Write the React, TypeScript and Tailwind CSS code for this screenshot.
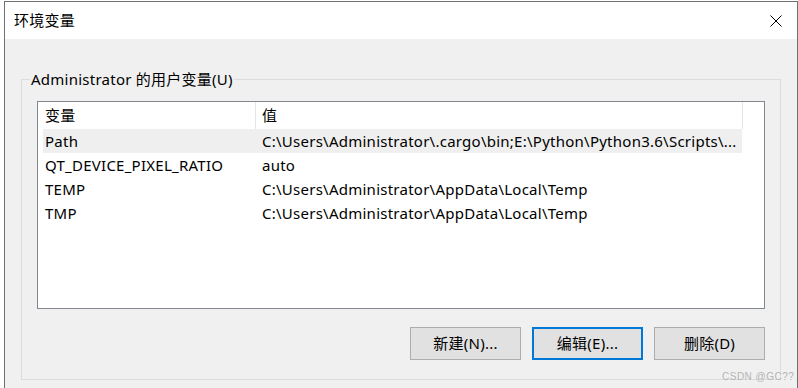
const rows = [
  { name: "Path", value: "C:\\Users\\Administrator\\.cargo\\bin;E:\\Python\\Python3.6\\Scripts\\...", selected: true },
  { name: "QT_DEVICE_PIXEL_RATIO", value: "auto" },
  { name: "TEMP", value: "C:\\Users\\Administrator\\AppData\\Local\\Temp" },
  { name: "TMP", value: "C:\\Users\\Administrator\\AppData\\Local\\Temp" },
]

function CloseIcon() {
  return (
    <svg width="12" height="12" viewBox="0 0 12 12" className="block">
      <path d="M0.5 0.5 L11.5 11.5 M11.5 0.5 L0.5 11.5" stroke="#000" strokeWidth="1" fill="none" />
    </svg>
  )
}

export default function App() {
  return (
    <div className="relative w-[798px] h-[388px] overflow-hidden bg-white pt-[1px] pl-[4px] font-['Noto_Sans','Noto_Sans_CJK_SC',sans-serif] text-[15px] tracking-[0.25px] text-black">
      {/* Dialog */}
      <div className="h-[400px] w-[794px] border-l border-t border-r border-[#707070] flex flex-col bg-[#f0f0f0]">
        {/* Title bar */}
        <div className="h-[37px] bg-white flex items-center justify-between pl-[9px] pr-[15px] shrink-0">
          <span className="leading-none">环境变量</span>
          <CloseIcon />
        </div>

        {/* Content */}
        <div className="px-[16px] pt-[30px]">
          <fieldset className="border border-[#dcdcdc] h-[311px]">
            <legend className="ml-[8px] px-[1px] leading-[20px]">Administrator 的用户变量(U)</legend>

            <div className="px-[15px] pb-[19px]">
              {/* List view */}
              <div className="mt-[12px] h-[208px] border border-[#828790] bg-white">
                {/* Header */}
                <div className="flex h-[27px] items-center">
                  <div className="w-[217px] h-full pl-[7px] flex items-center">变量</div>
                  <div className="w-px h-full bg-[#e5e5e5]" />
                  <div className="w-[486px] h-full pl-[6px] flex items-center">值</div>
                  <div className="w-px h-full bg-[#e5e5e5]" />
                </div>
                {/* Rows */}
                <div className="pl-[5px]">
                  {rows.map((r) => (
                    <div
                      key={r.name}
                      className={`flex h-[24px] w-[699px] items-center whitespace-nowrap ${r.selected ? "bg-[#efefef]" : ""}`}
                    >
                      <div className="w-[217px] pl-[2px]">{r.name}</div>
                      <div className="pl-[2px] overflow-hidden">{r.value}</div>
                    </div>
                  ))}
                </div>
              </div>

              {/* Buttons */}
              <div className="mt-[18px] flex justify-end gap-[11px]">
                <button className="w-[111px] h-[33px] bg-[#e1e1e1] border border-[#adadad]">新建(N)...</button>
                <button className="w-[111px] h-[33px] bg-[#e1e1e1] border-2 border-[#0078d7]">编辑(E)...</button>
                <button className="w-[111px] h-[33px] bg-[#e1e1e1] border border-[#adadad]">删除(D)</button>
              </div>
            </div>
          </fieldset>
        </div>
      </div>

      {/* Watermark */}
      <span className="absolute left-[722px] top-[369px] text-[10px] tracking-[0.5px] text-[#b4b4b4] font-['Liberation_Sans',sans-serif]">CSDN @GC??</span>
    </div>
  )
}
